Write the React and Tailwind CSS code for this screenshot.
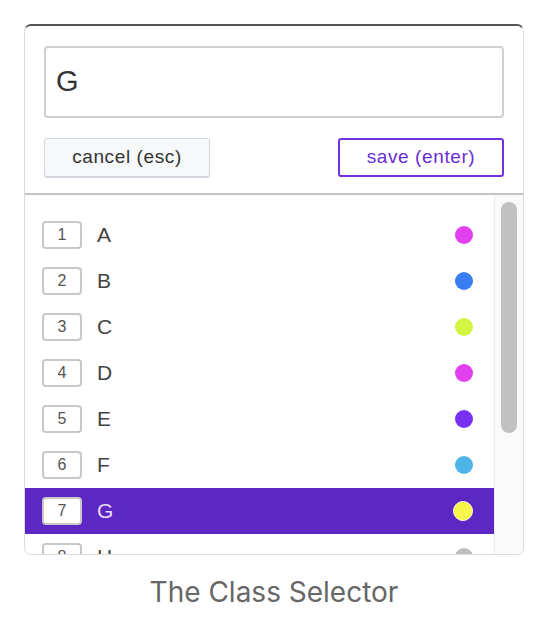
import React from 'react'

const classes = [
  { key: 1, name: 'A', color: '#e23ff0' },
  { key: 2, name: 'B', color: '#3a7cf1' },
  { key: 3, name: 'C', color: '#d3f542' },
  { key: 4, name: 'D', color: '#e23ff0' },
  { key: 5, name: 'E', color: '#7a30f0' },
  { key: 6, name: 'F', color: '#4fb5e8' },
  { key: 7, name: 'G', color: '#f8f54a' },
  { key: 8, name: 'H', color: '#bdbdbd' },
]

export default function App() {
  const selected = 7
  return (
    <div className="min-h-[630px] bg-white pt-[24px] pl-[24px] font-['Liberation_Sans',Arial,sans-serif]">
      <div className="w-[500px] flex flex-col items-center">
        <div className="w-[500px] h-[531px] rounded-[7px] border border-[#dcdcdc] border-t-2 border-t-[#555] overflow-hidden flex flex-col bg-white">
          <div className="px-[19px] pt-[20px]">
            <div className="h-[72px] rounded-[4px] border-2 border-[#cfcfcf] flex items-center px-[10px] text-[29px] text-[#333]">
              G
            </div>
            <div className="flex justify-between mt-[20px]">
              <button className="w-[166px] h-[39px] rounded-[3px] border-[1.5px] border-[#d3d8df] bg-[#f7f8fa] shadow-[0_1px_0_#cfd4db] text-[19px] tracking-[0.6px] text-[#333]">
                cancel (esc)
              </button>
              <button className="w-[166px] h-[39px] rounded-[3px] border-2 border-[#7131dc] bg-white text-[19px] tracking-[0.6px] text-[#6a2ed6]">
                save (enter)
              </button>
            </div>
          </div>
          <div className="mt-[16px] h-[2px] bg-[#c4c4c4]" />
          <div className="flex-1 flex min-h-0">
            <div className="flex-1 pt-[17px] overflow-hidden">
              {classes.map((c) => {
                const active = c.key === selected
                return (
                  <div
                    key={c.key}
                    className={
                      'h-[46px] flex items-center pl-[17px] pr-[21px] ' +
                      (active ? 'bg-[#5d27c3]' : 'bg-white')
                    }
                  >
                    <div className="w-[40px] h-[28px] rounded-[4px] border-2 border-[#c8c8c8] bg-white flex items-center justify-center text-[16px] text-[#555]">
                      {c.key}
                    </div>
                    <div className={'ml-[15px] flex-1 text-[21px] ' + (active ? 'text-[#eadff9]' : 'text-[#444]')}>
                      {c.name}
                    </div>
                    <div
                      className={active ? 'w-[20px] h-[20px] rounded-full border border-[#fdfbe0]' : 'w-[18px] h-[18px] rounded-full'}
                      style={{ backgroundColor: c.color }}
                    />
                  </div>
                )
              })}
            </div>
            <div className="w-[29px] border-l border-[#ececec] bg-[#fafafa] pt-[7px] flex justify-center">
              <div className="w-[16px] h-[231px] rounded-full bg-[#c1c1c1]" />
            </div>
          </div>
        </div>
        <div className="mt-[16px] text-[28px] text-[#676767] font-['Inter',sans-serif]">The Class Selector</div>
      </div>
    </div>
  )
}
